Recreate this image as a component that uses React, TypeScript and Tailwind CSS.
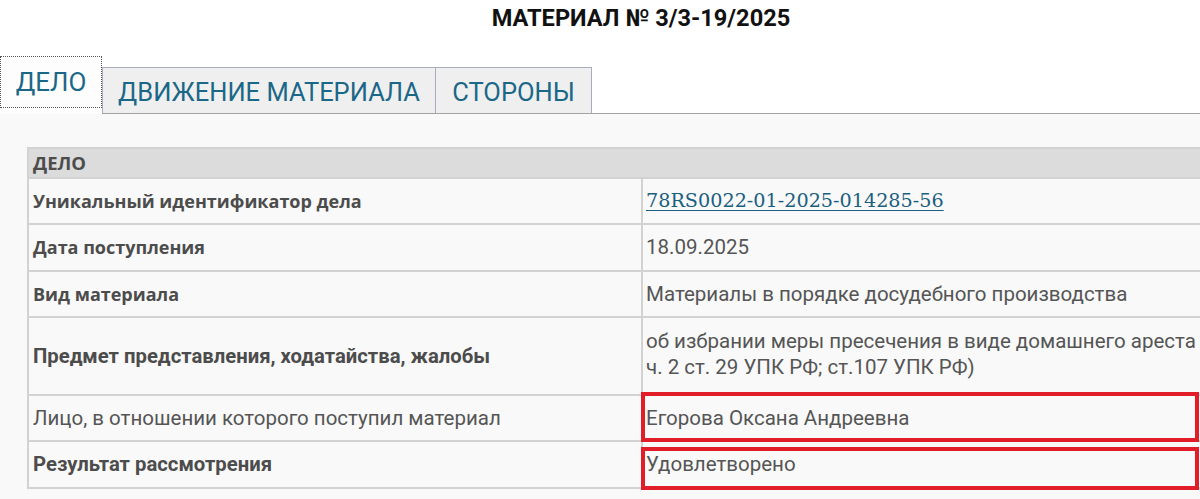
import React from "react";

const roboto = "font-['Roboto',sans-serif]";
const openSans = "font-['Open_Sans','Noto_Sans',sans-serif]";

function Row({
  h,
  label,
  labelClass,
  children,
  last,
}: {
  h: string;
  label: string;
  labelClass: string;
  children: React.ReactNode;
  last?: boolean;
}) {
  return (
    <div className={`grid grid-cols-[612px_1fr] ${h} ${last ? "" : "border-b-2 border-[#d2d2d2]"}`}>
      <div className={`flex items-center pl-[4px] whitespace-nowrap ${labelClass}`}>{label}</div>
      <div className="border-l-2 border-[#d2d2d2] pl-[3px] flex items-center whitespace-nowrap">{children}</div>
    </div>
  );
}

export default function App() {
  const boldOS = `${openSans} font-bold text-[18px] text-[#4c4c4c]`;
  const boldRb = `${roboto} font-bold text-[20.3px] text-[#4c4c4c]`;
  const regRb = `${roboto} text-[20.5px] text-[#555]`;
  const val = `${roboto} text-[20.5px] text-[#555]`;
  return (
    <div className="relative w-[1200px] h-[499px] overflow-hidden bg-white">
      <div className={`w-[1282px] ${roboto}`}>
        <h1 className="h-[56px] pt-[7px] text-center text-[23.6px] leading-[23px] font-bold text-[#111]">
          МАТЕРИАЛ № 3/3-19/2025
        </h1>
        <div className="flex h-[58px]">
          <div className="w-[102px] h-[58px] bg-[#fdfdfd]">
            <div className="h-[52px] border border-dotted border-[#555] flex items-center justify-center text-[26px] text-[#1b6788]">
              ДЕЛО
            </div>
          </div>
          <div className="flex-1 flex items-end border-b border-[#a3a3a3]">
            <div className="h-[46px] w-[334px] border border-b-0 border-[#a9abbf] bg-[#efefef] flex items-center justify-center pt-[3px] text-[25.5px] text-[#1b6788]">
              ДВИЖЕНИЕ МАТЕРИАЛА
            </div>
            <div className="h-[46px] w-[156px] border border-b-0 border-l-0 border-[#a9abbf] bg-[#efefef] flex items-center justify-center pt-[3px] text-[25.5px] text-[#1b6788]">
              СТОРОНЫ
            </div>
          </div>
        </div>
        <div className="bg-[#f9f9f9] pt-[33px] px-[27px] pb-[20px]">
          <div className="border-2 border-[#d2d2d2]">
            <div className="h-[30px] bg-[#dcdcdc] border-b-2 border-[#d2d2d2] flex items-center pl-[4px]">
              <span className={`${openSans} font-bold text-[18.5px] text-[#4c4c4c]`}>ДЕЛО</span>
            </div>
            <Row h="h-[46px]" label="Уникальный идентификатор дела" labelClass={boldOS}>
              <a
                href="#"
                className="font-['DejaVu_Serif',serif] text-[19.2px] text-[#1b5f80] underline underline-offset-[3px]"
              >
                78RS0022-01-2025-014285-56
              </a>
            </Row>
            <Row h="h-[47px]" label="Дата поступления" labelClass={boldOS}>
              <span className={val}>18.09.2025</span>
            </Row>
            <Row h="h-[46px]" label="Вид материала" labelClass={boldOS}>
              <span className={val}>Материалы в порядке досудебного производства</span>
            </Row>
            <Row h="h-[78px]" label="Предмет представления, ходатайства, жалобы" labelClass={boldRb}>
              <div className={`${val} leading-[26px] self-start pt-[10px]`}>
                <div>об избрании меры пресечения в виде домашнего ареста</div>
                <div>ч. 2 ст. 29 УПК РФ; ст.107 УПК РФ)</div>
              </div>
            </Row>
            <Row h="h-[46px]" label="Лицо, в отношении которого поступил материал" labelClass={regRb}>
              <span className={val}>Егорова Оксана Андреевна</span>
            </Row>
            <Row h="h-[45px]" label="Результат рассмотрения" labelClass={boldRb} last>
              <span className={val}>Удовлетворено</span>
            </Row>
          </div>
        </div>
      </div>
      <div className="absolute left-[641px] top-[392px] w-[558px] h-[50px] border-4 border-[#e11d2a]" />
      <div className="absolute left-[641px] top-[447px] w-[558px] h-[43px] border-4 border-[#e11d2a]" />
    </div>
  );
}
